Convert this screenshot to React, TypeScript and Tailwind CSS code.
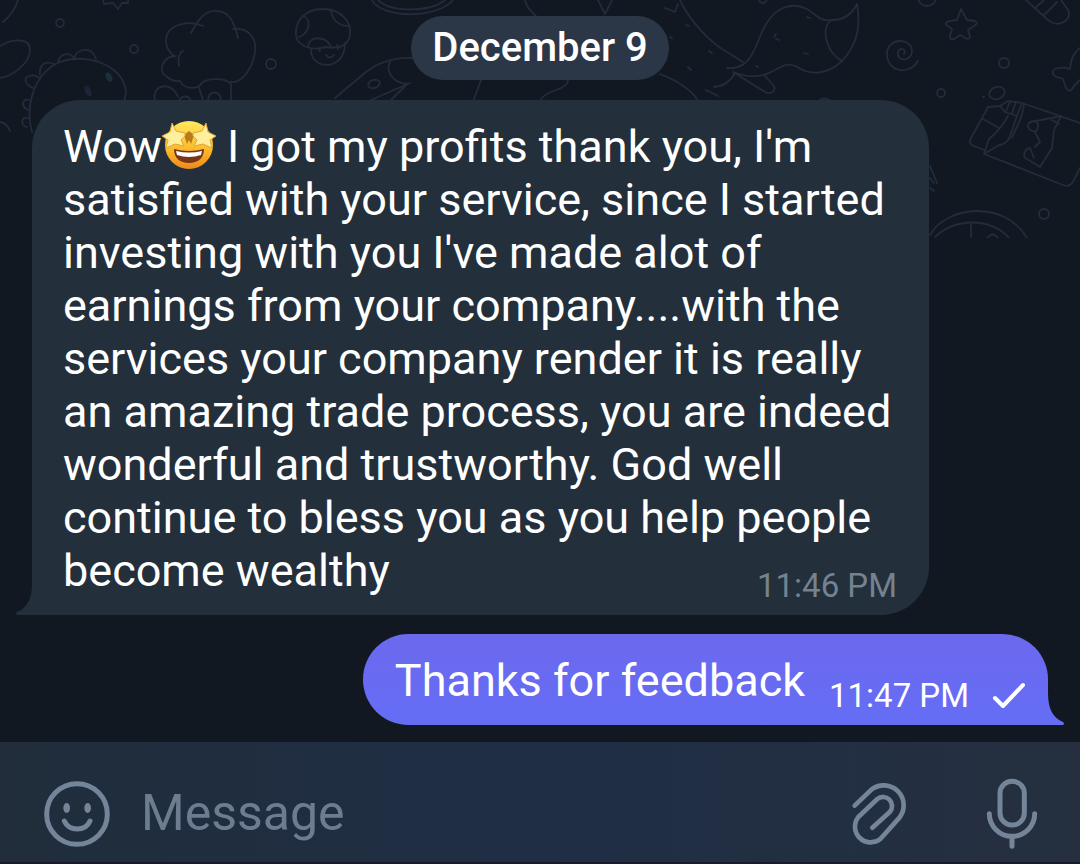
import React, { useState } from 'react';

const Doodles: React.FC = () => (
  <svg
    className="absolute top-0 left-0 w-[1080px] h-[238px] pointer-events-none"
    viewBox="0 0 1080 238"
    fill="none"
    stroke="#222c3b"
    strokeWidth="1.8"
    strokeLinecap="round"
    strokeLinejoin="round"
    aria-hidden="true"
  >
    {/* dots */}
    <circle cx="60" cy="23" r="4" />
    <circle cx="134" cy="49" r="4" />
    <circle cx="271" cy="64" r="5" />
    <circle cx="1004" cy="63" r="5" />
    <circle cx="941" cy="93" r="4" />
    <circle cx="1044" cy="214" r="5" />
    <circle cx="763" cy="-1" r="4" />
    <circle cx="927" cy="-3" r="9" />

    {/* leaf, left edge */}
    <path d="M18 0Q14 13 3 22M0 46C14 38 30 38 30 50C30 63 13 76 0 78M0 122Q7 123 10 131" />
    <path d="M103 0L104 4L113 3L118 9L122 3L128 3L128 0" />

    {/* dinosaur */}
    <path d="M32 132C26 112 30 75 60 62C88 52 124 66 126 92L124 102" />
    <path d="M40 75C39 65 45 60 54 64M58 62C60 53 69 52 74 58M74 58C77 48 92 46 96 59M33 88C25 84 23 78 29 76Q36 74 40 79M29 100C22 98 21 107 28 110M28 118C20 116 21 126 27 127" />
    <ellipse cx="88" cy="91" rx="3" ry="6" transform="rotate(-25 88 91)" fill="#1c2538" stroke="none" />
    <ellipse cx="109" cy="77" rx="3" ry="5" transform="rotate(-25 109 77)" fill="#1c2f3d" stroke="none" />

    {/* tree */}
    <path d="M191 33C198 20 205 10 216 11C228 11 234 20 238 38M203 26C188 20 166 24 166 41C166 49 170 52 174 56M233 29C248 27 257 38 255 52C253 66 243 84 230 82M183 51Q177 54 179 66M176 56C162 56 158 72 166 76Q172 82 180 81C184 90 198 89 201 84" />
    <path d="M201 84C205 78 225 77 231 84L231 100M199 88L203 100M208 100C208 90 221 90 221 100M155 100C151 85 172 80 178 97M179 100Q186 93 191 100" />

    {/* mushroom */}
    <path d="M297 40C292 23 304 9 323 9C341 9 352 22 350 35C348 46 339 49 326 47C317 49 307 51 297 40Z" />
    <path d="M303 16C312 19 310 33 299 37M331 11C332 20 339 26 349 26M308 46C310 35 326 36 331 47M311 50C311 70 345 72 345 43M319 50L320 51M337 45L338 49M326 55Q330 60 334 55" />
    <path d="M372 0C382 19 437 19 453 0M378 0C391 13 431 12 445 0" />

    {/* rocket */}
    <path d="M335 98L360 77C377 61 397 57 414 58M371 100L410 83M390 62C386 69 390 82 407 84L391 100" />
    <ellipse cx="374" cy="84" rx="6" ry="4" transform="rotate(-18 374 84)" />
    <path d="M481 80L474 99M541 99Q546 93 556 90Q568 86 568 80M525 0Q527 9 536 16M598 0L605 14L612 0M665 8L675 12L678 4" />

    {/* whale */}
    <path d="M680 0C688 17 700 32 719 47L743 62M660 74C676 80 689 88 697 99M706 90L718 96M727 68C750 70 754 50 762 32C772 8 790 1 807 9C817 15 820 22 832 20C846 20 853 12 857 4C861 25 857 45 842 61C826 76 810 74 801 69C790 62 785 64 775 70C762 78 748 78 733 72L765 92C771 95 776 91 774 86L765 76M735 73Q728 86 714 87M832 20C821 25 824 51 842 61" />
    <path d="M686 25L689 26M670 37L672 38M709 51L712 53M688 67L691 70M774 37L776 34M776 39L779 40M807 17L810 18M804 53L808 54M756 66L758 67" />
    <path d="M820 100Q824 97 829 100" />

    {/* star */}
    <path d="M961 9L967 20L975 21Q979 23 974 26L968 30L970 37Q969 40 965 38L960 35L954 39Q949 40 950 36L952 29L946 25Q945 22 950 21L957 20Z" />

    {/* spiral */}
    <path d="M918 61C910 75 888 73 887 55C886 38 911 36 912 51C912 62 896 62 898 52C900 47 907 49 904 54" />

    {/* candy */}
    <path d="M1026 0L1048 20C1058 29 1073 20 1068 10L1061 0M1036 7L1044 0M1044 15L1057 2" />

    {/* plane */}
    <path d="M1080 48Q1071 54 1070 69C1061 66 1051 68 1053 74C1056 79 1062 77 1063 79L1066 88Q1070 94 1074 86L1080 80" />

    {/* gift */}
    <ellipse cx="997" cy="93" rx="8" ry="6" transform="rotate(-20 997 93)" />
    <path d="M983 97L984 97M988 107L1000 106L1008 101L1022 103L1080 123M988 107L970 140Q969 144 974 146L984 150M983 119L999 128M1001 107L1005 112L1017 116L1022 103M1008 116Q1001 129 989 139L984 154L1063 185Q1070 188 1074 180L1080 168M1017 116L1009 139Q1004 145 999 145L984 154M1024 104C1023 119 1016 126 1012 138M1010 102L1006 111M1016 102L1012 113" />
    <path d="M1061 116L1036 121C1026 121 1025 129 1035 132L1040 142L1035 147M1061 116L1054 130L1052 148L1040 167L1027 159C1022 158 1024 149 1030 148L1034 158M1035 132Q1041 127 1036 121M1052 120L1059 124" />

    {/* wheel */}
    <path d="M930 235C947 205 1005 200 1027 238M935 237C955 218 990 217 1009 238M971 224L971 237M987 238Q993 231 998 238M930 166L937 183M930 178L934 183M930 188L934 191" />
  </svg>
);

const StarEyes: React.FC = () => (
  <svg className="inline-block w-[54px] h-[53px] align-bottom" viewBox="0 0 54 53" role="img" aria-label="star-struck">
    <defs>
      <linearGradient id="face" x1="0" y1="0" x2="0" y2="1">
        <stop offset="0" stopColor="#ffe95e" />
        <stop offset="0.6" stopColor="#fbb92b" />
        <stop offset="1" stopColor="#ec8a1c" />
      </linearGradient>
    </defs>
    <circle cx="27" cy="25" r="24" fill="url(#face)" />
    <path d="M22 15L27 11L32 15L29 24L27 20L25 24Z" fill="#b97a18" />
    <path d="M12 29Q27 33 42 29C42 38 36 43 27 43C18 43 12 38 12 29Z" fill="#7a3417" />
    <path d="M14 31Q27 34 40 31L39 35Q27 39 15 35Z" fill="#fff" />
    <path
      d="M10 3L14 11L23 13L23 16L19 20L22 26L13 24L4 28L6 20L0 16L8 12ZM44 3L46 12L54 16L48 20L50 28L41 24L32 26L35 20L31 16L31 13L40 11Z"
      fill="#ffef9c"
      stroke="#e3a437"
      strokeWidth="1"
      strokeLinejoin="round"
    />
  </svg>
);

const App: React.FC = () => {
  const [message, setMessage] = useState('');

  return (
    <div className="relative min-h-screen flex flex-col overflow-hidden bg-[#111822] font-['Roboto',sans-serif] text-white">
      <Doodles />

      <main className="relative flex-1 flex flex-col pt-4 pb-[17px]">
        <div className="self-center h-16 px-[21px] flex items-center rounded-full bg-[#2b3747] text-[40px] font-medium">
          December 9
        </div>

        <div className="relative mt-5 ml-8 mr-4 max-w-[897px] rounded-[48px] rounded-bl-none bg-[#232f3b] pl-[31px] pr-8 pt-5 pb-[13px]">
          <svg className="absolute -left-4 bottom-0 w-4 h-8" viewBox="0 0 16 32" fill="#232f3b" aria-hidden="true">
            <path d="M16 0C16 16 11 25 1 29Q-1 31 1 32L16 32Z" />
          </svg>
          <p className="text-[45px] leading-[53px]">
            Wow<StarEyes /> I got my profits thank you, I'm satisfied with your service, since I started investing with
            you I've made alot of earnings from your company....with the services your company render it is really an
            amazing trade process, you are indeed wonderful and trustworthy. God well continue to bless you as you help
            people become wealthy
            <time className="float-right mt-[26px] text-[33px] leading-8 text-[#75828f]">11:46 PM</time>
          </p>
        </div>

        <div className="relative self-end mt-[19px] mr-8 flex items-end rounded-[46px] rounded-br-none bg-linear-to-b from-[#6b69ee] to-[#656df5] pl-8 pr-[21px] pt-5 pb-[13px]">
          <svg className="absolute -right-4 bottom-0 w-4 h-8" viewBox="0 0 16 32" fill="#656df5" aria-hidden="true">
            <path d="M0 0C0 16 5 25 15 29Q17 31 15 32L0 32Z" />
          </svg>
          <p className="pb-[5px] text-[45px] leading-[53px]">Thanks for feedback</p>
          <time className="ml-6 text-[33px] leading-8">11:47 PM</time>
          <svg className="ml-[22px] w-9 h-8" viewBox="0 0 36 32" fill="none" stroke="#fff" strokeWidth="4" strokeLinecap="round" strokeLinejoin="round" aria-label="Sent">
            <path d="M4 18L12 26L32 5" />
          </svg>
        </div>
      </main>

      <footer className="relative h-[122px] pt-[34px] pl-[43px] pr-10 flex items-start border-b-2 border-[#171b2c] bg-linear-to-r from-[#212d3b] via-[#1f2e45] to-[#252f3f] text-[#74859a]">
        <button type="button" aria-label="Emoji" className="mt-1">
          <svg className="w-[68px] h-[68px]" viewBox="67 61 204 204" fill="none" stroke="currentColor" strokeWidth="15" strokeLinecap="round">
            <circle cx="169" cy="163" r="91" />
            <path d="M131 184C145 216 194 216 208 184" />
            <ellipse cx="138" cy="145" rx="10" ry="15" fill="currentColor" stroke="none" />
            <ellipse cx="201" cy="145" rx="10" ry="15" fill="currentColor" stroke="none" />
          </svg>
        </button>
        <input
          type="text"
          aria-label="Message"
          placeholder="Message"
          value={message}
          onChange={(e) => setMessage(e.target.value)}
          className="ml-[30px] h-[74px] flex-1 min-w-0 bg-transparent text-[50px] outline-none placeholder:text-[#6c7d92]"
        />
        <button type="button" aria-label="Attach file" className="mt-[3px]">
          <svg className="w-[60px] h-[70px]" viewBox="87 60 180 210" fill="none" stroke="currentColor" strokeWidth="14" strokeLinecap="round" strokeLinejoin="round">
            <path d="M101 140L152 91A60 60 0 0 1 236 175L178 240A47 47 0 0 1 112 174L169 120A27 27 0 0 1 207 158L154 206" />
          </svg>
        </button>
        <button type="button" aria-label="Record voice message" className="ml-[74px]">
          <svg className="w-14 h-[74px]" viewBox="493 50 168 222" fill="none" stroke="currentColor" strokeWidth="15" strokeLinecap="round">
            <rect x="541" y="66" width="73" height="131" rx="36" />
            <path d="M509 163A68 68 0 0 0 645 163M577 231L577 261" />
          </svg>
        </button>
      </footer>
    </div>
  );
};

export default App;
